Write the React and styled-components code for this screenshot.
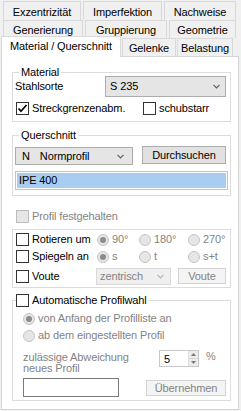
import React from "react";
import styled, { createGlobalStyle } from "styled-components";

const Global = createGlobalStyle`
  html, body { margin: 0; padding: 0; background: #f0f0f0; }
  body { font-family: "Liberation Sans", Arial, sans-serif; font-size: 11px; color: #000; letter-spacing: -0.12px; }
  * { box-sizing: border-box; }
`;

const GRAY = "#838383";

const Window = styled.div`
  width: 241px;
  height: 411px;
  background: #f0f0f0;
  overflow: hidden;
  display: flex;
  flex-direction: column;
`;

const TabRow = styled.div`
  display: flex;
  align-items: flex-end;
  gap: ${(p) => p.$gap}px;
  padding-left: ${(p) => p.$left}px;
  margin-top: ${(p) => p.$top}px;
  height: ${(p) => p.$h}px;
  position: relative;
`;

const Tab = styled.div`
  width: ${(p) => p.$w}px;
  height: ${(p) => p.$h}px;
  flex: none;
  border: 1px solid #d9d9d9;
  border-bottom: none;
  background: #f0f0f0;
  text-align: center;
  line-height: 13px;
  padding-top: ${(p) => p.$pt}px;
  white-space: nowrap;
`;

const ActiveTab = styled(Tab)`
  background: #fff;
  margin-bottom: -1px;
  position: relative;
  z-index: 2;
`;

const Panel = styled.div`
  margin-left: 1px;
  width: 238px;
  height: 354px;
  background: #fff;
  border: 1px solid #d4d4d4;
  padding: 9px 0 0 10px;
  display: flex;
  flex-direction: column;
  position: relative;
  z-index: 1;
`;

const Group = styled.fieldset`
  margin: ${(p) => p.$mt}px 0 0 0;
  padding: 0;
  border: 1px solid #dcdcdc;
  width: 219px;
  min-width: 0;
`;

const Legend = styled.legend`
  margin-left: ${(p) => p.$ml}px;
  padding: ${(p) => (p.$tight ? "0 2px 0 0" : "0 2px")};
  line-height: 13px;
  height: 13px;
  display: flex;
  align-items: center;
  gap: 3px;
`;

const Body = styled.div`
  display: flex;
  flex-direction: column;
  margin-top: ${(p) => p.$mt || 0}px;
  padding: ${(p) => p.$pt || 0}px 4px ${(p) => p.$pb}px ${(p) => p.$pl}px;
`;

const Row = styled.div`
  display: flex;
  align-items: ${(p) => p.$align || "center"};
  height: ${(p) => p.$h}px;
  margin-top: ${(p) => p.$mt || 0}px;
  padding-left: ${(p) => p.$pl || 0}px;
  gap: ${(p) => p.$gap || 0}px;
  justify-content: ${(p) => p.$justify || "flex-start"};
  flex: none;
`;

const Cell = styled.div`
  width: ${(p) => p.$w}px;
  flex: none;
  display: flex;
  align-items: center;
  gap: 3px;
  white-space: nowrap;
  color: ${(p) => (p.$disabled ? GRAY : "#000")};
`;

const Label = styled.span`
  line-height: 13px;
  white-space: nowrap;
  color: ${(p) => (p.$disabled ? GRAY : "#000")};
`;

const Combo = styled.div`
  width: ${(p) => p.$w}px;
  height: ${(p) => p.$h}px;
  flex: none;
  display: flex;
  align-items: center;
  justify-content: space-between;
  padding: 0 ${(p) => p.$pr}px 0 ${(p) => p.$pl}px;
  background: ${(p) => (p.$disabled ? "#efefef" : "#e5e5e5")};
  border: 1px solid ${(p) => (p.$disabled ? "#d9d9d9" : "#acacac")};
  color: ${(p) => (p.$disabled ? GRAY : "#000")};
  white-space: nowrap;
  margin-left: ${(p) => p.$ml || 0}px;
`;

const ComboText = styled.span`
  display: flex;
  gap: 10px;
  line-height: 13px;
`;

const Button = styled.div`
  width: ${(p) => p.$w}px;
  height: ${(p) => p.$h}px;
  flex: none;
  display: flex;
  align-items: center;
  justify-content: center;
  background: ${(p) => (p.$disabled ? "#f4f4f4" : "#e1e1e1")};
  border: 1px solid ${(p) => (p.$disabled ? "#d2d2d2" : "#adadad")};
  color: ${(p) => (p.$disabled ? GRAY : "#000")};
  margin-left: ${(p) => p.$ml || 0}px;
  margin-top: ${(p) => p.$mt || 0}px;
  align-self: flex-start;
`;

const Selected = styled.div`
  width: 213px;
  height: 19px;
  margin-top: 6px;
  border: 1px solid #c4c4c4;
  padding: 1px;
  display: flex;
`;

const SelectedInner = styled.div`
  flex: 1;
  background: #a9cdf1;
  padding-left: 2px;
  line-height: 15px;
`;

const BoxEl = styled.span`
  width: 13px;
  height: 13px;
  flex: none;
  border: 1px solid ${(p) => (p.$disabled ? "#bcbcbc" : "#333")};
  background: ${(p) => (p.$disabled ? "#e6e6e6" : "#fff")};
  display: inline-flex;
  align-items: center;
  justify-content: center;
`;

const RadioEl = styled.span`
  width: 12px;
  height: 12px;
  flex: none;
  border-radius: 50%;
  border: 1px solid #c4c4c4;
  background: #e6e6e6;
  display: inline-flex;
  align-items: center;
  justify-content: center;
  &::after {
    content: "";
    display: ${(p) => (p.$checked ? "block" : "none")};
    width: 6px;
    height: 6px;
    border-radius: 50%;
    background: #8c8c8c;
  }
`;

const LabelStack = styled.div`
  display: flex;
  flex-direction: column;
  line-height: 11px;
  color: ${GRAY};
  padding-top: 2px;
  width: 136px;
  flex: none;
`;

const Numeric = styled.div`
  width: 40px;
  height: 17px;
  flex: none;
  border: 1px solid #c8c8c8;
  background: #fff;
  display: flex;
  align-items: center;
  padding-left: 4px;
  justify-content: space-between;
`;

const Spin = styled.div`
  width: 10px;
  height: 15px;
  display: flex;
  flex-direction: column;
  border-left: 1px solid #e0e0e0;
`;

const SpinHalf = styled.div`
  flex: 1;
  background: #ececec;
  display: flex;
  align-items: center;
  justify-content: center;
  border-bottom: ${(p) => (p.$top ? "1px solid #d8d8d8" : "none")};
`;

const Percent = styled.span`
  color: ${GRAY};
  margin-left: 7px;
  line-height: 13px;
`;

const TextBox = styled.div`
  width: 96px;
  height: 19px;
  flex: none;
  border: 1px solid #7a7a7a;
  background: #fff;
`;

const Chevron = ({ color = "#606060" }) => (
  <svg width="7" height="5" viewBox="0 0 7 5">
    <polyline points="0.5,0.8 3.5,3.8 6.5,0.8" fill="none" stroke={color} strokeWidth="1.2" />
  </svg>
);

const Check = () => (
  <svg width="11" height="11" viewBox="0 0 11 11">
    <polyline points="1.5,5.5 4,8.2 9.5,2" fill="none" stroke="#000" strokeWidth="1.7" />
  </svg>
);

const Arrow = ({ up }) => (
  <svg width="5" height="3" viewBox="0 0 5 3">
    <polygon points={up ? "0,3 5,3 2.5,0" : "0,0 5,0 2.5,3"} fill="#7a7a7a" />
  </svg>
);

const Checkbox = ({ checked, disabled }) => (
  <BoxEl $disabled={disabled}>{checked && <Check />}</BoxEl>
);

export default function App() {
  return (
    <>
      <Global />
      <Window>
        <TabRow $top={1} $left={3} $gap={2} $h={19}>
          <Tab $w={78} $h={19} $pt={4}>Exzentrizität</Tab>
          <Tab $w={79} $h={19} $pt={4}>Imperfektion</Tab>
          <Tab $w={72} $h={19} $pt={4}>Nachweise</Tab>
        </TabRow>
        <TabRow $top={0} $left={3} $gap={2} $h={18}>
          <Tab $w={80} $h={18} $pt={3}>Generierung</Tab>
          <Tab $w={82} $h={18} $pt={3}>Gruppierung</Tab>
          <Tab $w={67} $h={18} $pt={3}>Geometrie</Tab>
        </TabRow>
        <TabRow $top={-2} $left={1} $gap={1} $h={20}>
          <ActiveTab $w={120} $h={21} $pt={3}>Material / Querschnitt</ActiveTab>
          <Tab $w={54} $h={18} $pt={3}>Gelenke</Tab>
          <Tab $w={56} $h={18} $pt={3}>Belastung</Tab>
        </TabRow>
        <Panel>
          <Group $mt={0}>
            <Legend $ml={6}>Material</Legend>
            <Body $mt={-3} $pb={6} $pl={2}>
              <Row $h={21} $justify="space-between">
                <Label>Stahlsorte</Label>
                <Combo $w={121} $h={21} $pl={4} $pr={5}>
                  <ComboText>S 235</ComboText>
                  <Chevron />
                </Combo>
              </Row>
              <Row $h={13} $mt={5} $pl={1}>
                <Cell $w={127}>
                  <Checkbox checked />
                  <Label>Streckgrenzenabm.</Label>
                </Cell>
                <Cell $w={70}>
                  <Checkbox />
                  <Label>schubstarr</Label>
                </Cell>
              </Row>
            </Body>
          </Group>

          <Group $mt={7}>
            <Legend $ml={6}>Querschnitt</Legend>
            <Body $mt={5} $pb={5} $pl={2}>
              <Row $h={18} $align="flex-start">
                <Combo $w={118} $h={18} $pl={6} $pr={8}>
                  <ComboText>
                    <span>N</span>
                    <span>Normprofil</span>
                  </ComboText>
                  <Chevron />
                </Combo>
                <Button $w={84} $h={18} $ml={9} $mt={-1}>
                  Durchsuchen
                </Button>
              </Row>
              <Selected>
                <SelectedInner>IPE 400</SelectedInner>
              </Selected>
            </Body>
          </Group>

          <Row $h={13} $mt={14} $pl={4}>
            <Cell $w={120} $disabled>
              <Checkbox disabled />
              <Label $disabled>Profil festgehalten</Label>
            </Cell>
          </Row>

          <Group $mt={6}>
            <Body $pt={3} $pb={2} $pl={3}>
              <Row $h={13}>
                <Cell $w={81}>
                  <Checkbox />
                  <Label>Rotieren um</Label>
                </Cell>
                <Cell $w={42} $disabled>
                  <RadioEl $checked />
                  <Label $disabled>90°</Label>
                </Cell>
                <Cell $w={49} $disabled>
                  <RadioEl />
                  <Label $disabled>180°</Label>
                </Cell>
                <Cell $w={36} $disabled>
                  <RadioEl />
                  <Label $disabled>270°</Label>
                </Cell>
              </Row>
              <Row $h={13} $mt={4}>
                <Cell $w={81}>
                  <Checkbox />
                  <Label>Spiegeln an</Label>
                </Cell>
                <Cell $w={42} $disabled>
                  <RadioEl $checked />
                  <Label $disabled>s</Label>
                </Cell>
                <Cell $w={49} $disabled>
                  <RadioEl />
                  <Label $disabled>t</Label>
                </Cell>
                <Cell $w={36} $disabled>
                  <RadioEl />
                  <Label $disabled>s+t</Label>
                </Cell>
              </Row>
              <Row $h={17} $mt={5}>
                <Cell $w={80}>
                  <Checkbox />
                  <Label>Voute</Label>
                </Cell>
                <Combo $w={75} $h={17} $pl={3} $pr={6} $disabled>
                  <ComboText>zentrisch</ComboText>
                  <Chevron color="#b4b4b4" />
                </Combo>
                <Button $w={48} $h={16} $ml={7} $disabled>
                  Voute
                </Button>
              </Row>
            </Body>
          </Group>

          <Group $mt={6}>
            <Legend $ml={3} $tight>
              <Checkbox />
              <span>Automatische Profilwahl</span>
            </Legend>
            <Body $mt={5} $pb={3} $pl={10}>
              <Row $h={13}>
                <Cell $w={180} $disabled>
                  <RadioEl $checked />
                  <Label $disabled>von Anfang der Profilliste an</Label>
                </Cell>
              </Row>
              <Row $h={13} $mt={4}>
                <Cell $w={180} $disabled>
                  <RadioEl />
                  <Label $disabled>ab dem eingestellten Profil</Label>
                </Cell>
              </Row>
              <Row $h={24} $mt={8} $align="flex-start" $pl={-1}>
                <LabelStack>
                  <span>zulässige Abweichung</span>
                  <span>neues Profil</span>
                </LabelStack>
                <Numeric>
                  <span>5</span>
                  <Spin>
                    <SpinHalf $top>
                      <Arrow up />
                    </SpinHalf>
                    <SpinHalf>
                      <Arrow />
                    </SpinHalf>
                  </Spin>
                </Numeric>
                <Percent>%</Percent>
              </Row>
              <Row $h={19} $mt={4} $align="flex-start" $pl={-1}>
                <TextBox />
                <Button $w={80} $h={16} $ml={27} $mt={2} $disabled>
                  Übernehmen
                </Button>
              </Row>
            </Body>
          </Group>
        </Panel>
      </Window>
    </>
  );
}
